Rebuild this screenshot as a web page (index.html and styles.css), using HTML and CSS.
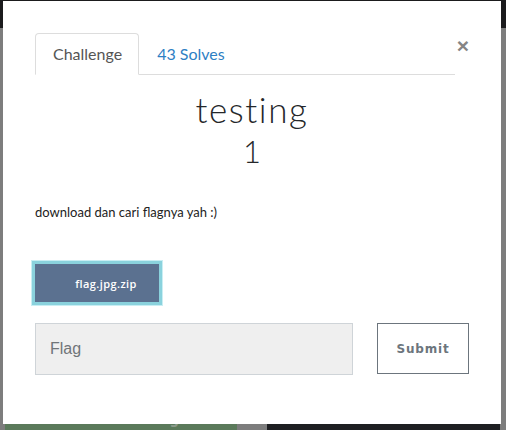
FILE: index.html
```html
<!DOCTYPE html>
<html>
<head>
<meta charset="utf-8">
<link rel="stylesheet" href="styles.css">
</head>
<body>
<div class="page">
  <header class="topbar"></header>
  <div class="spacer"></div>
  <div class="cards">
    <div class="card card-green">Read the Log</div>
    <div class="card card-dark">Member have Journal</div>
  </div>
</div>
<div class="modal">
  <button class="close" aria-label="Close">&times;</button>
  <nav class="tabs">
    <a class="tab active">Challenge</a>
    <a class="tab">43 Solves</a>
  </nav>
  <div class="content">
    <h2 class="title">testing</h2>
    <h3 class="value">1</h3>
    <p class="desc">download dan cari flagnya yah :)</p>
    <div class="files">
      <a class="file-btn"><span class="file-icon"></span>flag.jpg.zip</a>
    </div>
    <form class="answer">
      <input class="flag-input" type="text" placeholder="Flag">
      <button class="submit" type="button">Submit</button>
    </form>
  </div>
</div>
</body>
</html>
```

FILE: styles.css
```css
* { box-sizing: border-box; }
html, body { margin: 0; padding: 0; }
body {
  width: 506px;
  height: 430px;
  overflow: hidden;
  background: #7d7d7d;
  font-family: Lato, "Liberation Sans", sans-serif;
}
.page {
  display: flex;
  flex-direction: column;
  height: 430px;
}
.topbar {
  height: 28px;
  background: #1b1b1d;
}
.spacer { flex: 1; }
.cards {
  display: flex;
  gap: 30px;
  padding-left: 5px;
  height: 24px;
}
.card {
  font-family: "DejaVu Sans Mono", monospace;
  font-size: 16px;
  font-weight: bold;
  text-align: center;
  padding-top: 3px;
}
.card-green { width: 232px; background: #5b7a5b; color: #8a9a8a; }
.card-dark { width: 233px; background: #1e1f22; color: #a7adbd; }

.modal {
  position: fixed;
  left: 3px;
  top: 1px;
  width: 498px;
  height: 423px;
  background: #fff;
  padding: 32px 32px 0 32px;
}
.close {
  position: absolute;
  top: 34px;
  right: 32px;
  border: 0;
  background: none;
  padding: 0;
  font-family: "Liberation Sans", sans-serif;
  font-size: 21px;
  font-weight: bold;
  line-height: 1;
  color: #858585;
}
.tabs {
  display: flex;
  gap: 0;
  margin-right: 14px;
  border-bottom: 1px solid #dddddd;
  height: 42px;
}
.tab {
  display: block;
  height: 42px;
  padding: 10px 16px 0 17px;
  font-size: 16px;
  color: #2e7fc4;
  border: 1px solid transparent;
  border-radius: 4px 4px 0 0;
}
.tab.active {
  color: #555;
  border-color: #dddddd;
  border-bottom-color: #fff;
  background: #fff;
  height: 42px;
}
.content { display: flex; flex-direction: column; }
.title {
  margin: 14px 0 0;
  text-align: center;
  font-size: 35px;
  font-weight: 300;
  letter-spacing: 1.6px;
  color: #25272a;
  line-height: 40px;
}
.value {
  margin: 2px 0 0;
  text-align: center;
  font-size: 31px;
  font-weight: 300;
  color: #25272a;
  line-height: 40px;
}
.desc {
  margin: 32px 0 0;
  font-size: 13px;
  color: #222;
  line-height: 18px;
}
.files {
  display: flex;
  margin-top: 39px;
  margin-left: -4px;
}
.file-btn {
  display: flex;
  align-items: center;
  justify-content: center;
  width: 132px;
  height: 46px;
  background: #5b7190;
  border: 4px solid #8ad2dd;
  outline: 1px solid #c9eef3;
  outline-offset: -1px;
  color: #fff;
  font-family: "Open Sans", sans-serif;
  font-size: 11px;
  font-weight: 600;
  letter-spacing: 0.4px;
  padding-left: 18px;
}
.answer {
  display: flex;
  gap: 24px;
  margin-top: 17px;
}
.flag-input {
  flex: 1;
  height: 52px;
  background: #efefef;
  border: 1px solid #cfd4d8;
  padding: 0 0 0 14px;
  font-family: "Liberation Sans", sans-serif;
  font-size: 16px;
  color: #555;
}
.flag-input::placeholder { color: #707579; }
.submit {
  width: 92px;
  height: 51px;
  background: #fff;
  border: 1px solid #6c757d;
  color: #6c757d;
  font-family: "DejaVu Sans", sans-serif;
  font-size: 12px;
  font-weight: bold;
  letter-spacing: 0.8px;
  padding: 0;
}
```
